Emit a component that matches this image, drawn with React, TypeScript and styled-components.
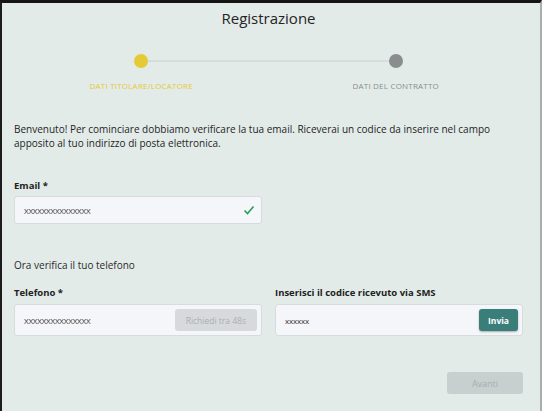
import React from "react";
import styled, { createGlobalStyle } from "styled-components";

const font = `"Open Sans", "Noto Sans", sans-serif`;
const teal = `#3a7e7a`;
const yellow = `#e5c935`;

const GlobalStyle = createGlobalStyle`
  html, body {
    margin: 0;
    padding: 0;
    height: 100%;
  }
  body {
    font-family: ${font};
    background: #e3ebe9;
  }
  #root {
    height: 100%;
  }
`;

const Frame = styled.div`
  box-sizing: border-box;
  height: 100%;
  background: #e3ebe9;
  border-top: 3px solid #141414;
  border-left: 2px solid #1c1c1c;
  border-right: 2px solid #a8aeae;
  padding: 0 17px 0 12px;
  color: #222;
`;

const Title = styled.h1`
  margin: 0;
  padding-top: 5px;
  text-align: center;
  font-size: 15px;
  font-weight: 400;
  line-height: 20px;
  color: #242424;
`;

const Stepper = styled.div`
  display: grid;
  grid-template-columns: 1fr 1fr;
  margin-top: 26px;
  position: relative;
`;

const Track = styled.div`
  position: absolute;
  top: 6px;
  left: 25%;
  right: 25%;
  height: 2px;
  background: #d8dcdc;
`;

const Step = styled.div`
  display: flex;
  flex-direction: column;
  align-items: center;
  position: relative;
`;

const Dot = styled.div<{ $color: string }>`
  width: 14px;
  height: 14px;
  border-radius: 50%;
  background: ${({ $color }) => $color};
`;

const StepLabel = styled.div<{ $color: string }>`
  margin-top: 12px;
  font-size: 8px;
  font-weight: 500;
  text-transform: uppercase;
  color: ${({ $color }) => $color};
  letter-spacing: 0.2px;
`;

const Intro = styled.p`
  margin: 31px 0 0;
  font-size: 10px;
  line-height: 14px;
  color: #242424;
`;

const Label = styled.label<{ $gap: number }>`
  display: block;
  font-size: 9.5px;
  font-weight: 700;
  color: #222;
  line-height: 14px;
  margin-bottom: ${({ $gap }) => $gap}px;
`;

const Field = styled.div`
  margin-top: 29px;
  width: 248px;
`;

const Box = styled.div<{ $height: number }>`
  box-sizing: border-box;
  height: ${({ $height }) => $height}px;
  display: flex;
  align-items: center;
  justify-content: space-between;
  background: #f5f6fa;
  border: 1px solid #d6dbdb;
  border-radius: 3px;
  padding: 0 4px 0 9px;
`;

const Value = styled.span`
  font-size: 8px;
  color: #333;
  letter-spacing: -0.2px;
`;

const Note = styled.p`
  margin: 34px 0 0;
  font-size: 10px;
  line-height: 15px;
  color: #2a2a2a;
`;

const Row = styled.div`
  display: grid;
  grid-template-columns: 248px 248px;
  column-gap: 13px;
  margin-top: 13px;
`;

const SmallButton = styled.button<{ $active?: boolean }>`
  height: 22px;
  border: none;
  border-radius: 3px;
  font-family: ${font};
  font-size: 8.5px;
  padding: 0 ${({ $active }) => ($active ? 9 : 11)}px;
  background: ${({ $active }) => ($active ? teal : "#d7dadc")};
  color: ${({ $active }) => ($active ? "#fff" : "#a9aeb2")};
  font-weight: ${({ $active }) => ($active ? 700 : 400)};
  box-shadow: ${({ $active }) => ($active ? "0 1px 2px rgba(0,0,0,0.3)" : "none")};
`;

const Footer = styled.div`
  display: flex;
  justify-content: flex-end;
  margin-top: 36px;
`;

const NextButton = styled.button`
  width: 76px;
  height: 22px;
  border: none;
  border-radius: 3px;
  background: #c8d0cf;
  color: #a6adad;
  font-family: ${font};
  font-size: 9px;
`;

const CheckIcon = () => (
  <svg width="12" height="10" viewBox="0 0 12 10">
    <polyline points="1.5,5.5 4.5,8.5 10.5,1.5" fill="none" stroke="#27a055" strokeWidth="1.6" />
  </svg>
);

export default function App() {
  return (
    <>
      <GlobalStyle />
      <Frame>
        <Title>Registrazione</Title>
        <Stepper>
          <Track />
          <Step>
            <Dot $color={yellow} />
            <StepLabel $color={yellow}>Dati titolare/locatore</StepLabel>
          </Step>
          <Step>
            <Dot $color="#8a8d8e" />
            <StepLabel $color="#8a8d8e">Dati del contratto</StepLabel>
          </Step>
        </Stepper>

        <Intro>
          Benvenuto! Per cominciare dobbiamo verificare la tua email. Riceverai un codice da inserire nel campo
          apposito al tuo indirizzo di posta elettronica.
        </Intro>

        <Field>
          <Label $gap={3}>Email *</Label>
          <Box $height={28} style={{ paddingRight: 6 }}>
            <Value>XXXXXXXXXXXXXXX</Value>
            <CheckIcon />
          </Box>
        </Field>

        <Note>Ora verifica il tuo telefono</Note>

        <Row>
          <div>
            <Label $gap={4}>Telefono *</Label>
            <Box $height={32}>
              <Value>XXXXXXXXXXXXXXX</Value>
              <SmallButton>Richiedi tra 48s</SmallButton>
            </Box>
          </div>
          <div>
            <Label $gap={4}>Inserisci il codice ricevuto via SMS</Label>
            <Box $height={32}>
              <Value>xxxxxx</Value>
              <SmallButton $active>Invia</SmallButton>
            </Box>
          </div>
        </Row>

        <Footer>
          <NextButton>Avanti</NextButton>
        </Footer>
      </Frame>
    </>
  );
}
